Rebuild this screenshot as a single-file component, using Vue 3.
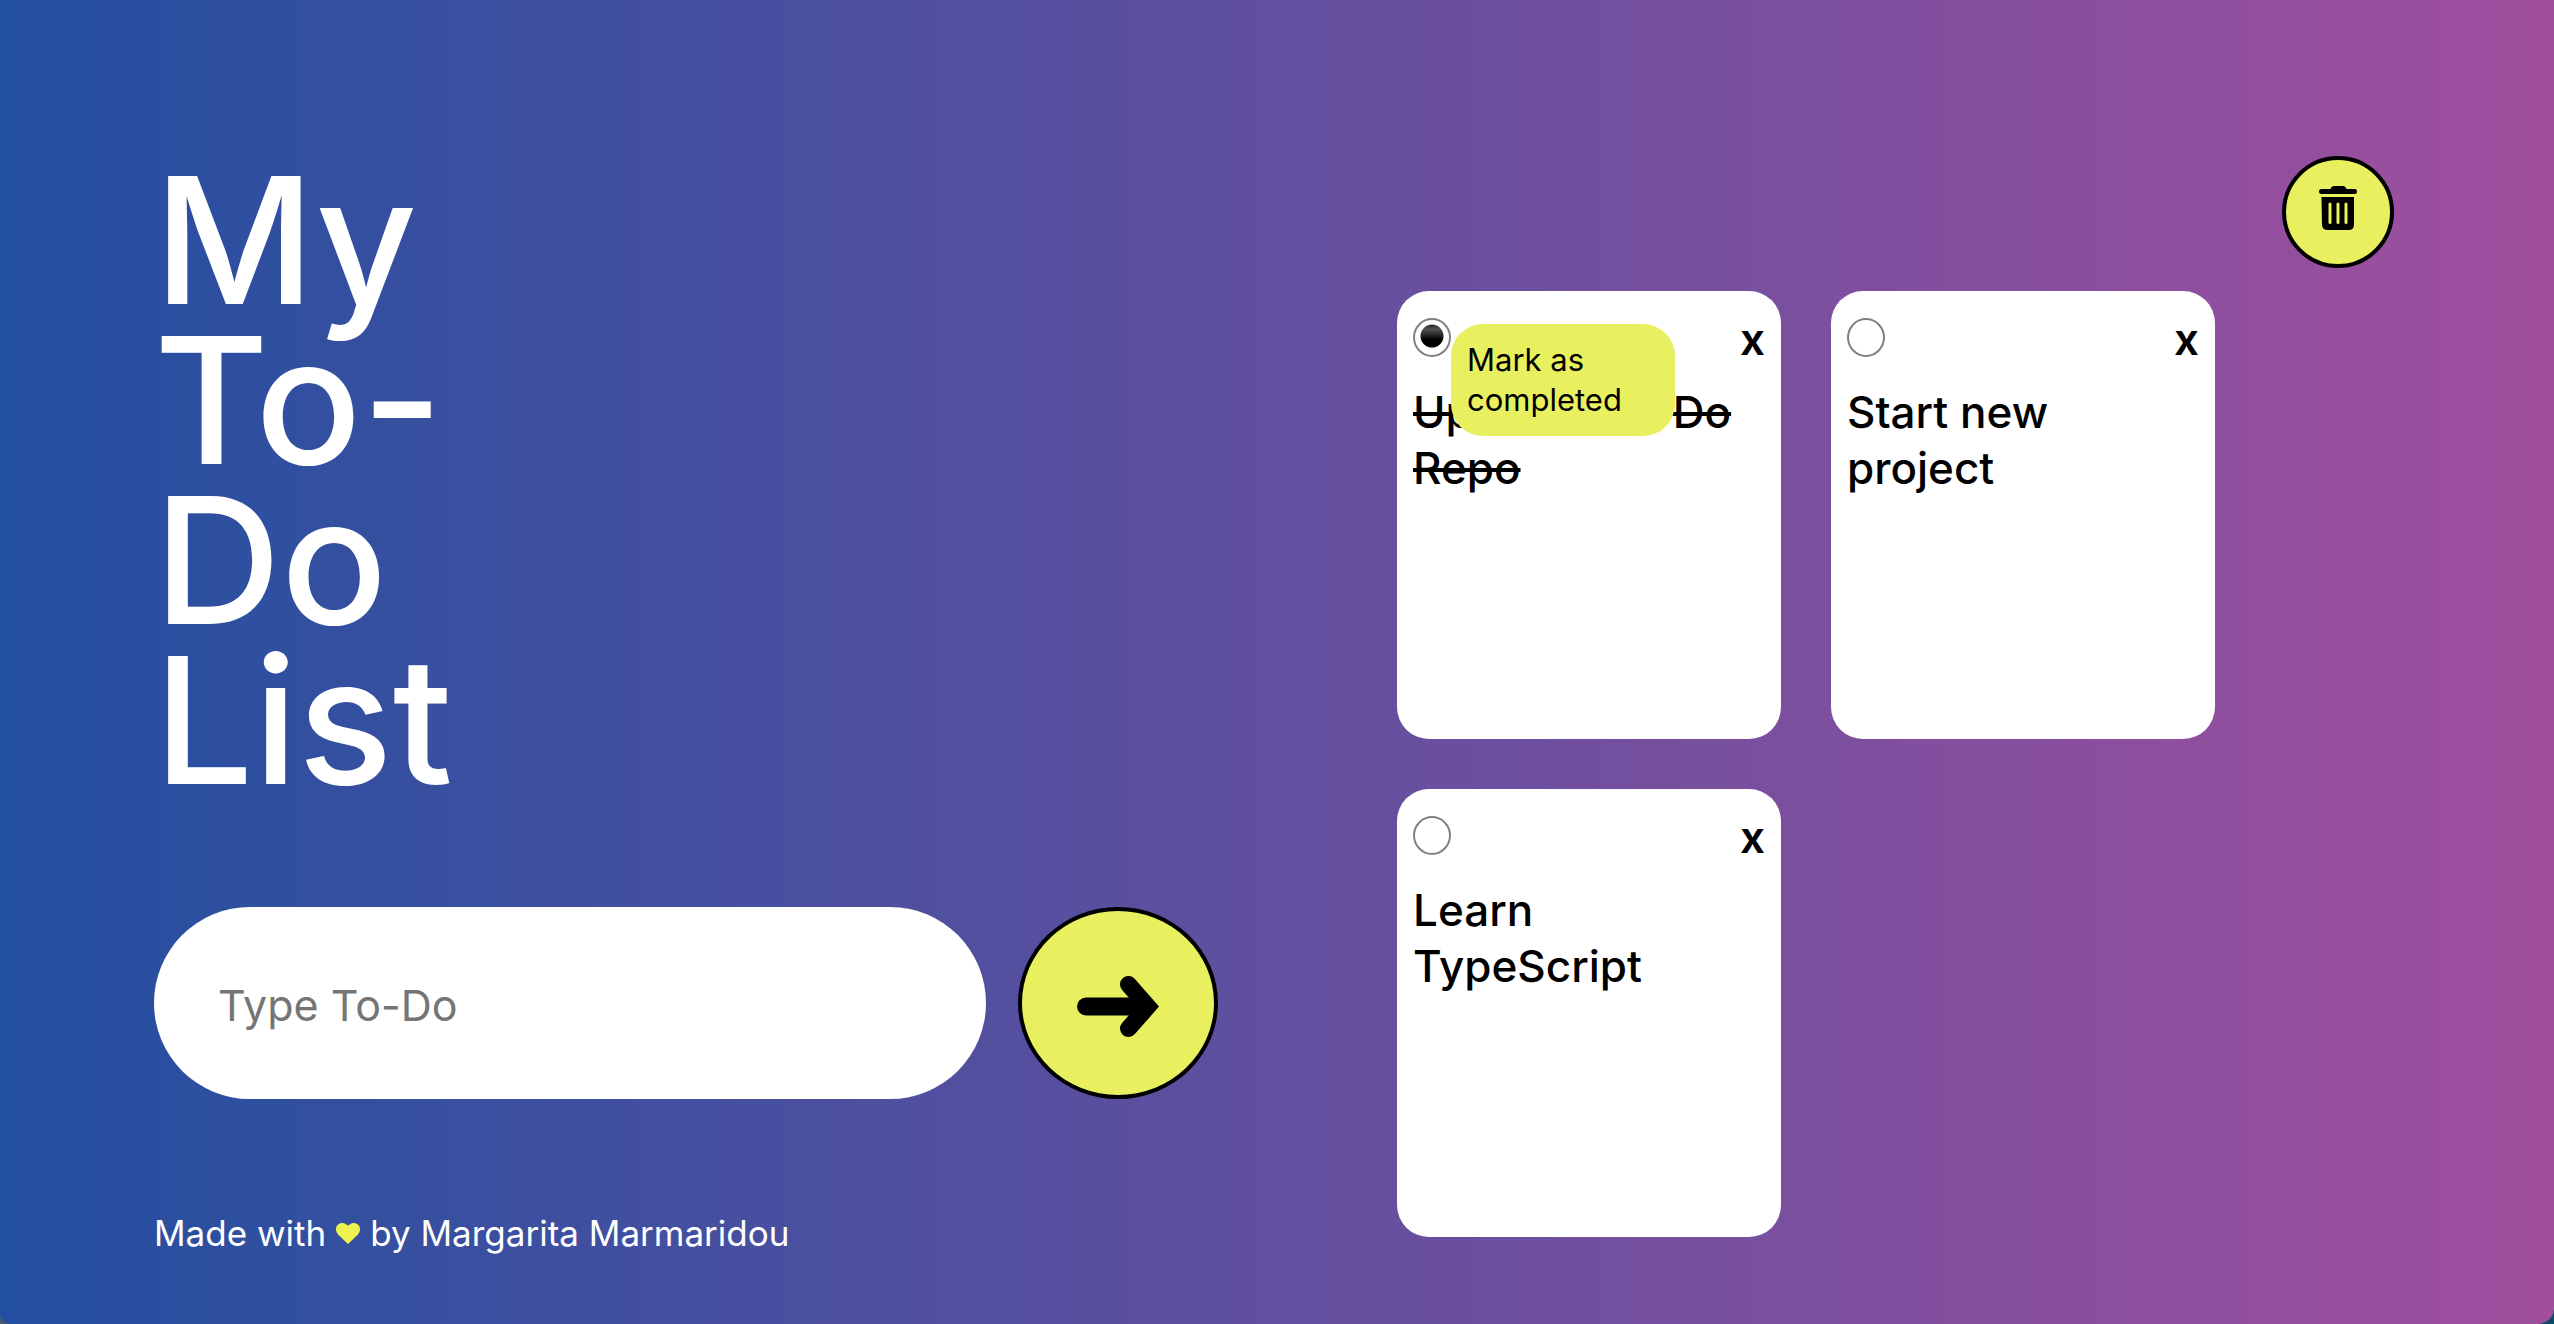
<script setup>
import { ref } from 'vue'

const draft = ref('')
const todos = ref([
  { id: 1, text: 'Update To - Do Repo', done: true, hint: true },
  { id: 2, text: 'Start new project', done: false, hint: false },
  { id: 3, text: 'Learn TypeScript', done: false, hint: false },
])

function add() {
  const text = draft.value.trim()
  if (!text) return
  todos.value.push({ id: Date.now(), text, done: false, hint: false })
  draft.value = ''
}
function remove(id) {
  todos.value = todos.value.filter((t) => t.id !== id)
}
</script>

<template>
  <div class="page">
    <section class="intro">
      <h1 class="title">My<br />To-<br />Do<br />List</h1>
      <form class="form" @submit.prevent="add">
        <input v-model="draft" class="field" type="text" placeholder="Type To-Do" aria-label="Type To-Do" />
        <button class="add" type="submit" aria-label="Add">
          <svg width="82" height="61" viewBox="0 0 82 61" fill="none" stroke="#000" stroke-linecap="round">
            <path d="M9 30.5H66" stroke-width="18" />
            <path d="M51.5 8.5L70.8 30.5L51.5 52.5" stroke-width="17" />
            <path d="M58 22L68 30.5L58 39Z" fill="#000" stroke="none" />
          </svg>
        </button>
      </form>
      <footer class="credit">
        <span>Made with</span>
        <svg width="24" height="21" viewBox="0 0 24 21" fill="#edf24f">
          <path d="M12 21L2 11.400C-.6 8.600-.6 4.300 1.600 2C4-.5 8-.7 10.200 1.400L12 2.500L13.800 1.400C16-.7 20-.5 22.400 2C24.600 4.300 24.600 8.600 22 11.400Z" />
        </svg>
        <span>by Margarita Marmaridou</span>
      </footer>
    </section>

    <section class="board">
      <button class="clear" type="button" aria-label="Delete all" @click="todos = []">
        <svg width="38" height="44" viewBox="0 0 38 44">
          <path d="M2.500 3H11.500Q12.500 0 15 0H24Q26.500 0 27.500 3H35.500A2.500 2.500 0 0 1 35.500 8H2.500A2.500 2.500 0 0 1 2.500 3Z" />
          <path d="M2.500 11H35V38.500Q35 44 29.500 44H9Q3 44 3 38.500Z" />
          <path d="M11 18V36.500M19 18V36.500M27 18V36.500" stroke="#e8f05f" stroke-width="3" stroke-linecap="round" />
        </svg>
      </button>
      <ul class="cards">
        <li v-for="todo in todos" :key="todo.id" class="card">
          <div class="bar">
            <span class="mark">
              <input :id="'todo-' + todo.id" v-model="todo.done" class="check" type="checkbox" />
              <span v-if="todo.hint" class="tip" role="tooltip">Mark as completed</span>
            </span>
            <button class="remove" type="button" aria-label="Delete" @click="remove(todo.id)">x</button>
          </div>
          <label class="text" :class="{ done: todo.done }" :for="'todo-' + todo.id">{{ todo.text }}</label>
        </li>
      </ul>
    </section>
  </div>
</template>

<style>
body {
  margin: 0;
  background: linear-gradient(to right, #4a5a78, #0d4a66);
}
</style>

<style scoped>
.page {
  box-sizing: border-box;
  min-height: 100vh;
  padding: 156px 160px 68px 154px;
  display: grid;
  grid-template-columns: 1064fr 997fr;
  column-gap: 179px;
  align-items: start;
  background: linear-gradient(to right, #234fa0, #a04f9e);
  border-radius: 0 0 16px 10px;
  font-family: Inter, "Open Sans", sans-serif;
  color: #000;
}
.title {
  margin: 4px 0 107px;
  font-size: 176px;
  line-height: 160px;
  font-weight: 500;
  color: #fff;
}
.form {
  display: flex;
  gap: 32px;
}
.field {
  box-sizing: border-box;
  flex: 1;
  min-width: 0;
  height: 192px;
  padding: 4px 64px 0;
  border: 0;
  border-radius: 96px;
  background: #fff;
  font: inherit;
  font-size: 43px;
  outline: none;
}
.field::placeholder {
  color: #757575;
  opacity: 1;
}
.add,
.clear {
  display: flex;
  align-items: center;
  justify-content: center;
  border: 4px solid #000;
  border-radius: 50%;
  background: #e8f05f;
  cursor: pointer;
}
.add {
  width: 200px;
  height: 192px;
  padding: 6px 0 0;
}
.credit {
  display: flex;
  align-items: center;
  gap: 10px;
  margin-top: 112px;
  font-size: 35px;
  line-height: 44px;
  color: #fff;
}
.board {
  display: flex;
  flex-direction: column;
}
.clear {
  align-self: flex-end;
  width: 112px;
  height: 112px;
  padding: 0 0 8px;
}
.cards {
  display: grid;
  grid-template-columns: repeat(auto-fill, 384px);
  gap: 50px;
  margin: 23px 0 0;
  padding: 0;
  list-style: none;
}
.card {
  box-sizing: border-box;
  min-height: 448px;
  padding: 16px;
  border-radius: 32px;
  background: #fff;
}
.bar {
  display: flex;
  align-items: center;
  justify-content: space-between;
  height: 61px;
  margin-bottom: 16px;
}
.mark {
  position: relative;
  display: flex;
}
.check {
  appearance: none;
  width: 38px;
  height: 39px;
  margin: 0;
  border: 2px solid #808080;
  border-radius: 50%;
  background: #fff;
}
.check:checked {
  background:
    radial-gradient(circle at 50% 46%, transparent 11px, #fff 12px),
    linear-gradient(#222 12%, #555 26%, #000 56%);
}
.tip {
  position: absolute;
  top: 6px;
  left: 100%;
  z-index: 1;
  box-sizing: border-box;
  width: 224px;
  padding: 16px;
  border-radius: 32px;
  background: #e8f05f;
  font-size: 31px;
  line-height: 40px;
}
.remove {
  padding: 4px 0 0;
  border: 0;
  background: none;
  font: inherit;
  font-size: 44px;
  line-height: 61px;
  font-weight: 600;
  color: #000;
  cursor: pointer;
}
.text {
  display: block;
  font-size: 44px;
  line-height: 56px;
  font-weight: 500;
}
.done {
  text-decoration: line-through;
  text-decoration-thickness: 4px;
}
</style>
